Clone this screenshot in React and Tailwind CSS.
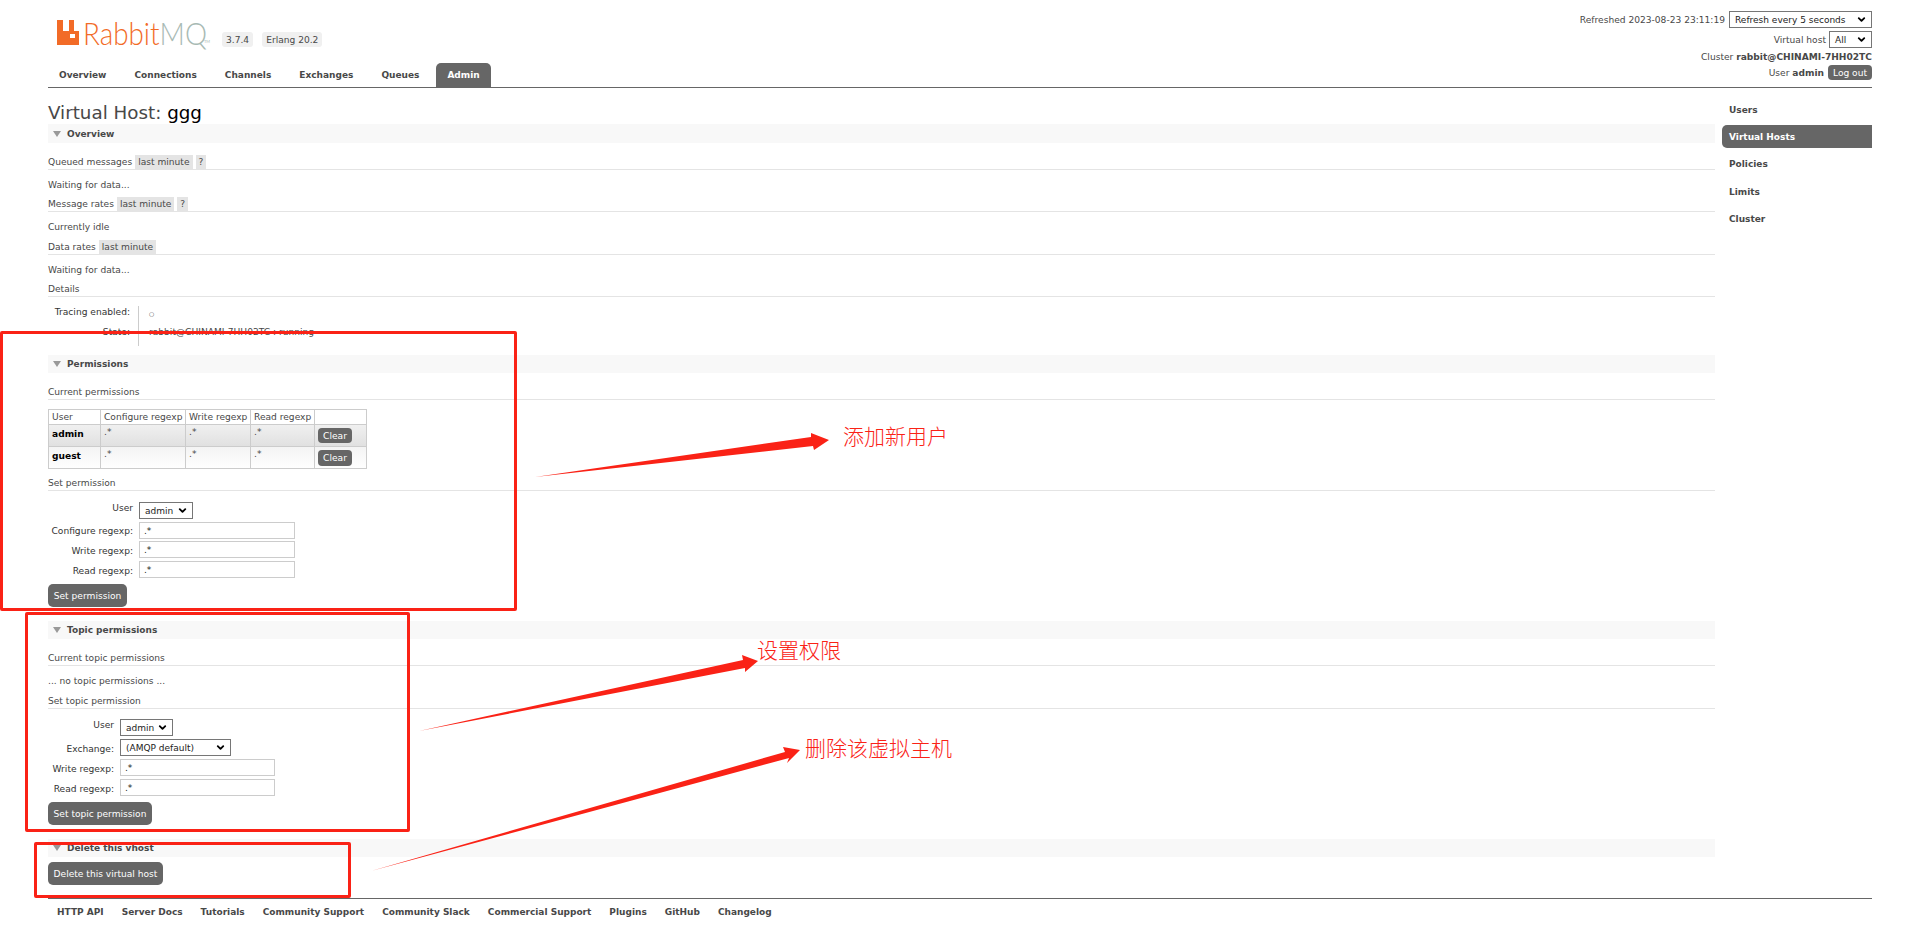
import React from 'react';
import { ChevronDown } from 'lucide-react';

const tabs = ['Overview', 'Connections', 'Channels', 'Exchanges', 'Queues'];
const sideItems = ['Users', 'Virtual Hosts', 'Policies', 'Limits', 'Cluster'];
const footerLinks = ['HTTP API', 'Server Docs', 'Tutorials', 'Community Support', 'Community Slack', 'Commercial Support', 'Plugins', 'GitHub', 'Changelog'];

const Logo = () => (
    <div className="relative flex items-start w-[156px] h-[30px]">
        <svg width="22" height="25" viewBox="0 0 22 25" className="block shrink-0">
            <path fill="#f26b27" fillRule="evenodd" d="M0 0h6v11h6V0h5v11h5v14H0zM13 14v4h5v-4z" />
        </svg>
        <span className="ml-[4px] origin-left scale-x-[.87] whitespace-nowrap font-['Lato',sans-serif] font-light text-[32px] leading-[26px] text-[#f26b27]">
            Rabbit<span className="text-[#a8bab4]">MQ</span>
        </span>
        <span className="absolute left-[147px] top-[19px] font-['Lato',sans-serif] text-[4px] leading-[5px] text-[#a8bab4]">TM</span>
    </div>
);

const Select = ({ children, className }) => (
    <div className={`relative flex items-center h-[17px] border border-[#767676] bg-white pl-[5px] text-[9px] whitespace-nowrap text-[#222] ${className}`}>
        {children}
        <ChevronDown size={11} strokeWidth={4} className="absolute right-[4px] top-[2px] text-black" />
    </div>
);

const TextInput = ({ className }) => (
    <div className={`flex items-center h-[17px] border border-[#ccc] bg-white pl-[4px] text-[9px] text-[#222] ${className}`}>.*</div>
);

const Bar = ({ title, className }) => (
    <div className={`flex items-center bg-[#f8f8f8] h-[18px] pl-[5px] ${className}`}>
        <span className="w-0 h-0 border-x-[4px] border-x-transparent border-t-[6px] border-t-[#999] mr-[6px]" />
        <span className="font-bold text-[9px] text-[#484848]">{title}</span>
    </div>
);

const Subhead = ({ title, pills = [], className }) => (
    <div className={`flex items-center h-[15px] border-b border-[#e4e4e4] ${className}`}>
        <span>{title}</span>
        {pills.map(p => (
            <span key={p} className="flex items-center h-[14px] px-[3px] ml-[3px] first:ml-[4px] bg-[#e4e4e4]">{p}</span>
        ))}
    </div>
);

const Button = ({ children, className }) => (
    <div className={`flex items-center justify-center h-[23px] rounded-[5px] bg-[#666] text-white whitespace-nowrap ${className}`}>
        {children}
    </div>
);

const FormRow = ({ label, labelWidth, className, labelClass = 'pt-[4px]', children }) => (
    <div className={`flex ${className}`}>
        <div className={`text-right whitespace-nowrap text-[#333] ${labelClass}`} style={{ width: labelWidth }}>{label}</div>
        <div className="ml-[6px]">{children}</div>
    </div>
);

const PermRow = ({ user, gradient, last }) => (
    <tr className={gradient}>
        <td className="border border-[#ccc] px-[3px] pt-[3px] align-top font-bold text-black">{user}</td>
        <td className="border border-[#ccc] px-[3px] pt-[1px] align-top">.*</td>
        <td className="border border-[#ccc] px-[3px] pt-[1px] align-top">.*</td>
        <td className="border border-[#ccc] px-[3px] pt-[1px] align-top">.*</td>
        <td className="border border-[#ccc] px-[3px] align-middle">
            <div className={`flex items-center w-[34px] justify-center rounded-[4px] bg-[#666] text-white ${last ? 'h-[16px]' : 'h-[15px]'}`}>Clear</div>
        </td>
    </tr>
);

const Annotations = () => (
    <>
        <div className="absolute left-0 top-[331px] w-[517px] h-[280px] border-[3px] border-[#fa2216] rounded-[2px]" />
        <div className="absolute left-[25px] top-[612px] w-[385px] h-[220px] border-[3px] border-[#fa2216] rounded-[2px]" />
        <div className="absolute left-[34px] top-[842px] w-[317px] h-[56px] border-[3px] border-[#fa2216] rounded-[2px]" />
        <svg width="1920" height="937" className="absolute left-0 top-0 pointer-events-none">
            <polygon fill="#fa2216" points="535,477 811,437 811,433 829,440 814,450 813,446" />
            <polygon fill="#fa2216" points="419,731 743,660 742,655 758,661 745,672 745,668" />
            <polygon fill="#fa2216" points="371,871 785,752 783,747 800,750 787,763 789,758" />
        </svg>
        <div className="absolute left-[843px] top-[424px] text-[21px] leading-[26px] font-light text-[#fa2216]">添加新用户</div>
        <div className="absolute left-[757px] top-[638px] text-[21px] leading-[26px] font-light text-[#fa2216]">设置权限</div>
        <div className="absolute left-[805px] top-[736px] text-[21px] leading-[26px] font-light text-[#fa2216]">删除该虚拟主机</div>
    </>
);

const App = () => {
    return (
        <div className="relative w-[1920px] h-[937px] overflow-hidden bg-white text-[9.1px] leading-[12px] text-[#484848] font-['DejaVu_Sans','Noto_Sans_CJK_SC',sans-serif]">
            {/* Header */}
            <header className="mx-[48px] h-[88px] border-b border-[#666] flex justify-between">
                <div className="flex flex-col justify-between">
                    <div className="flex items-end pt-[20px] pl-[9px]">
                        <Logo />
                        <span className="flex items-center h-[15px] px-[4px] ml-[9px] mb-[3px] rounded-[3px] bg-[#f0f0f0]">3.7.4</span>
                        <span className="flex items-center h-[15px] px-[4px] ml-[9px] mb-[3px] rounded-[3px] bg-[#f0f0f0]">Erlang 20.2</span>
                    </div>
                    <nav className="flex h-[24px] gap-[6px] text-[9px]">
                        {tabs.map(t => (
                            <div key={t} className="flex items-center px-[11px] font-bold text-[#484848]">{t}</div>
                        ))}
                        <div className="flex items-center px-[11px] font-bold text-white bg-[#666] rounded-t-[5px]">Admin</div>
                    </nav>
                </div>
                <div className="flex flex-col items-end pt-[11px]">
                    <div className="flex items-center h-[17px]">
                        <span>Refreshed 2023-08-23 23:11:19</span>
                        <Select className="w-[143px] ml-[4px]">Refresh every 5 seconds</Select>
                    </div>
                    <div className="flex items-center h-[17px] mt-[3px]">
                        <span>Virtual host</span>
                        <Select className="w-[43px] ml-[3px]">All</Select>
                    </div>
                    <div className="mt-[3px]">Cluster <b>rabbit@CHINAMI-7HH02TC</b></div>
                    <div className="flex items-center mt-[2px]">
                        <span>User <b>admin</b></span>
                        <span className="flex items-center justify-center w-[44px] h-[15px] ml-[4px] rounded-[4px] bg-[#666] text-white">Log out</span>
                    </div>
                </div>
            </header>

            <div className="flex pl-[48px] pr-[48px]">
                {/* Main column */}
                <main className="w-[1667px] flex flex-col">
                    <h1 className="h-[23px] mt-[13px] text-[18.3px] leading-[24px]">Virtual Host: <span className="text-black">ggg</span></h1>
                    <Bar title="Overview" className="h-[19px]" />
                    <Subhead title="Queued messages" pills={['last minute', '?']} className="mt-[12px]" />
                    <p className="mt-[9px]">Waiting for data...</p>
                    <Subhead title="Message rates" pills={['last minute', '?']} className="mt-[6px]" />
                    <p className="mt-[9px]">Currently idle</p>
                    <Subhead title="Data rates" pills={['last minute']} className="mt-[7px]" />
                    <p className="mt-[9px]">Waiting for data...</p>
                    <Subhead title="Details" className="mt-[6px]" />
                    <div className="mt-[9px] h-[40px] grid grid-cols-[90px_1fr] grid-rows-2 w-fit">
                        <div className="pr-[8px] text-right text-[#333]">Tracing enabled:</div>
                        <div className="border-l border-[#ccc] pl-[10px] pt-[2px] text-[6px]">○</div>
                        <div className="pr-[8px] text-right text-[#333]">State:</div>
                        <div className="border-l border-[#ccc] pl-[10px]">rabbit@CHINAMI-7HH02TC : running</div>
                    </div>

                    <Bar title="Permissions" className="mt-[9px]" />
                    <Subhead title="Current permissions" className="mt-[12px]" />
                    <table className="mt-[9px] w-[318px] border-collapse table-fixed">
                        <colgroup>
                            <col className="w-[52px]" />
                            <col className="w-[85px]" />
                            <col className="w-[65px]" />
                            <col className="w-[64px]" />
                            <col className="w-[52px]" />
                        </colgroup>
                        <thead>
                            <tr className="h-[15px]">
                                {['User', 'Configure regexp', 'Write regexp', 'Read regexp', ''].map(h => (
                                    <th key={h} className="border border-[#ccc] px-[3px] p-0 text-left font-normal whitespace-nowrap">{h}</th>
                                ))}
                            </tr>
                        </thead>
                        <tbody>
                            <PermRow user="admin" gradient="h-[22px] bg-gradient-to-b from-[#f0f0f0] to-[#e0e0e0]" />
                            <PermRow user="guest" gradient="h-[22px] bg-gradient-to-b from-[#f4f4f4] to-[#ffffff]" last />
                        </tbody>
                    </table>
                    <Subhead title="Set permission" className="mt-[7px]" />
                    <div className="mt-[11px] flex flex-col">
                        <FormRow label="User" labelWidth={85} labelClass="pt-0" className="h-[20px]"><Select className="w-[54px]">admin</Select></FormRow>
                        <FormRow label="Configure regexp:" labelWidth={85} labelClass="pt-[3px]" className="h-[19px]"><TextInput className="w-[156px]" /></FormRow>
                        <FormRow label="Write regexp:" labelWidth={85} className="h-[20px]"><TextInput className="w-[156px]" /></FormRow>
                        <FormRow label="Read regexp:" labelWidth={85} className="h-[17px]"><TextInput className="w-[156px]" /></FormRow>
                    </div>
                    <Button className="mt-[6px] w-[79px]">Set permission</Button>

                    <Bar title="Topic permissions" className="mt-[14px]" />
                    <Subhead title="Current topic permissions" className="mt-[12px]" />
                    <p className="mt-[9px]">... no topic permissions ...</p>
                    <Subhead title="Set topic permission" className="mt-[7px]" />
                    <div className="mt-[10px] flex flex-col">
                        <FormRow label="User" labelWidth={66} labelClass="pt-0" className="h-[20px]"><Select className="w-[53px]">admin</Select></FormRow>
                        <FormRow label="Exchange:" labelWidth={66} className="h-[20px]"><Select className="w-[111px]">(AMQP default)</Select></FormRow>
                        <FormRow label="Write regexp:" labelWidth={66} className="h-[20px]"><TextInput className="w-[155px]" /></FormRow>
                        <FormRow label="Read regexp:" labelWidth={66} className="h-[17px]"><TextInput className="w-[155px]" /></FormRow>
                    </div>
                    <Button className="mt-[6px] w-[104px]">Set topic permission</Button>

                    <Bar title="Delete this vhost" className="mt-[14px]" />
                    <Button className="mt-[5px] w-[115px]">Delete this virtual host</Button>
                </main>

                {/* Admin side menu */}
                <aside className="ml-[7px] w-[150px] flex flex-col gap-[4.4px] pt-[10px] text-[9px]">
                    {sideItems.map(item => (
                        <div
                            key={item}
                            className={item === 'Virtual Hosts'
                                ? 'flex items-center h-[23px] pl-[7px] rounded-l-[5px] bg-[#666] text-white font-bold'
                                : 'flex items-center h-[23px] pl-[7px] text-[#484848] font-bold'}
                        >
                            {item}
                        </div>
                    ))}
                </aside>
            </div>

            {/* Footer */}
            <footer className="mx-[48px] mt-[13px] border-t border-[#666] flex gap-[18px] pl-[9px] pt-[7px] font-bold text-[9px]">
                {footerLinks.map(l => <span key={l}>{l}</span>)}
            </footer>

            <Annotations />
        </div>
    );
};

export default App;
